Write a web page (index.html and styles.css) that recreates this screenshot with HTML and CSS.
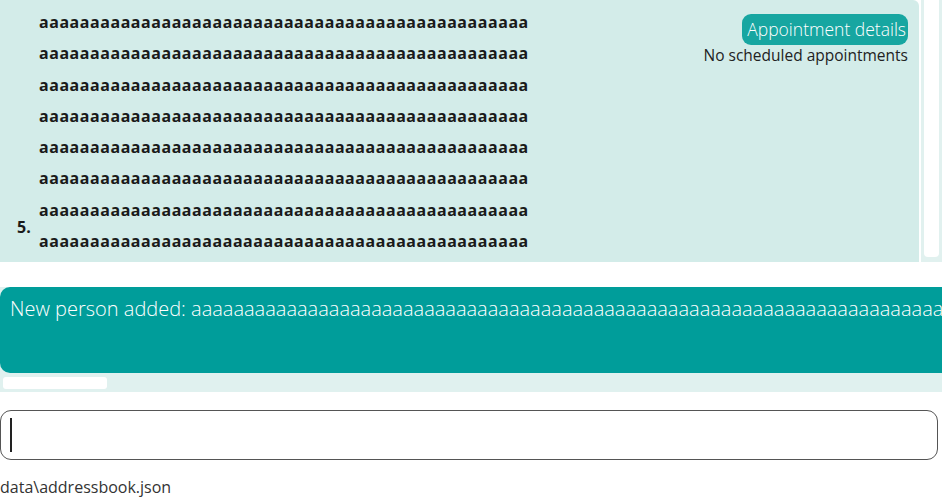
FILE: index.html
```html
<!DOCTYPE html>
<html>
<head>
<meta charset="utf-8">
<link rel="stylesheet" href="styles.css">
</head>
<body>
<div class="list">
  <div class="card">
    <div class="index">5.</div>
    <div class="name">
      <div>aaaaaaaaaaaaaaaaaaaaaaaaaaaaaaaaaaaaaaaaaaaaaaaa</div>
      <div>aaaaaaaaaaaaaaaaaaaaaaaaaaaaaaaaaaaaaaaaaaaaaaaa</div>
      <div>aaaaaaaaaaaaaaaaaaaaaaaaaaaaaaaaaaaaaaaaaaaaaaaa</div>
      <div>aaaaaaaaaaaaaaaaaaaaaaaaaaaaaaaaaaaaaaaaaaaaaaaa</div>
      <div>aaaaaaaaaaaaaaaaaaaaaaaaaaaaaaaaaaaaaaaaaaaaaaaa</div>
      <div>aaaaaaaaaaaaaaaaaaaaaaaaaaaaaaaaaaaaaaaaaaaaaaaa</div>
      <div>aaaaaaaaaaaaaaaaaaaaaaaaaaaaaaaaaaaaaaaaaaaaaaaa</div>
      <div>aaaaaaaaaaaaaaaaaaaaaaaaaaaaaaaaaaaaaaaaaaaaaaaa</div>
    </div>
    <div class="appt">
      <div class="appt-title">Appointment details</div>
      <div class="appt-none">No scheduled appointments</div>
    </div>
  </div>
  <div class="vscroll"><div class="vthumb"></div></div>
</div>
<div class="result">
  <div class="result-box">New person added: aaaaaaaaaaaaaaaaaaaaaaaaaaaaaaaaaaaaaaaaaaaaaaaaaaaaaaaaaaaaaaaaaaaaaaaaaaaaaaaaaaaaaaaaaaaaaaaaaaaa</div>
  <div class="hscroll"><div class="hthumb"></div></div>
</div>
<div class="command">
  <div class="input"><span class="caret"></span></div>
</div>
<div class="status">data\addressbook.json</div>
</body>
</html>
```
FILE: styles.css
```css
html, body {
  margin: 0;
  padding: 0;
  background: #ffffff;
  width: 942px;
  height: 497px;
  overflow: hidden;
  font-family: "Open Sans", "Noto Sans", sans-serif;
}
.list {
  display: flex;
  height: 262px;
  gap: 2px;
}
.card {
  width: 919px;
  background: #d3ece9;
  border-top-right-radius: 6px;
  display: flex;
  align-items: flex-start;
  box-sizing: border-box;
  padding: 1px 11px 0 17px;
  position: relative;
}
.index {
  align-self: flex-end;
  margin-bottom: 24px;
  width: 22px;
  font-weight: 700;
  font-size: 16px;
  color: #1a1a1a;
}
.name {
  font-family: "Noto Sans", sans-serif;
  font-weight: 700;
  font-size: 16px;
  letter-spacing: 0.62px;
  line-height: 31.3px;
  color: #1a1a1a;
  padding-top: 6px;
}
.appt {
  margin-left: auto;
  display: flex;
  flex-direction: column;
  align-items: flex-end;
  padding-top: 13px;
}
.appt-title {
  background: #17a6a1;
  color: #ffffff;
  font-weight: 300;
  font-size: 17.5px;
  line-height: 31px;
  padding: 0 2px 0 5px;
  border-radius: 9px;
}
.appt-none {
  font-size: 15.5px;
  color: #222222;
  line-height: 20px;
}
.vscroll {
  flex: 1;
  background: #e1f1ef;
  padding: 0 3px 5px 3px;
}
.vthumb {
  background: #ffffff;
  height: 100%;
  border-radius: 0 0 4px 4px;
}
.result {
  margin-top: 25px;
  background: #e0f1ef;
  height: 105px;
}
.result-box {
  background: #009d9a;
  height: 86px;
  border-radius: 10px 0 0 10px;
  color: #ffffff;
  font-weight: 300;
  font-size: 20px;
  line-height: 20px;
  padding: 12px 0 0 10px;
  box-sizing: border-box;
  white-space: nowrap;
  overflow: hidden;
}
.hscroll {
  padding: 4px 0 0 3px;
}
.hthumb {
  width: 104px;
  height: 12px;
  background: #ffffff;
  border-radius: 3px;
}
.command {
  margin-top: 18px;
  padding-right: 4px;
}
.input {
  height: 50px;
  border: 1.5px solid #555555;
  border-radius: 11px;
  box-sizing: border-box;
  display: flex;
  align-items: center;
  padding-left: 9px;
}
.caret {
  width: 1.5px;
  height: 34px;
  background: #222222;
}
.status {
  margin-top: 17px;
  font-size: 16px;
  color: #333333;
  line-height: 20px;
}
```
